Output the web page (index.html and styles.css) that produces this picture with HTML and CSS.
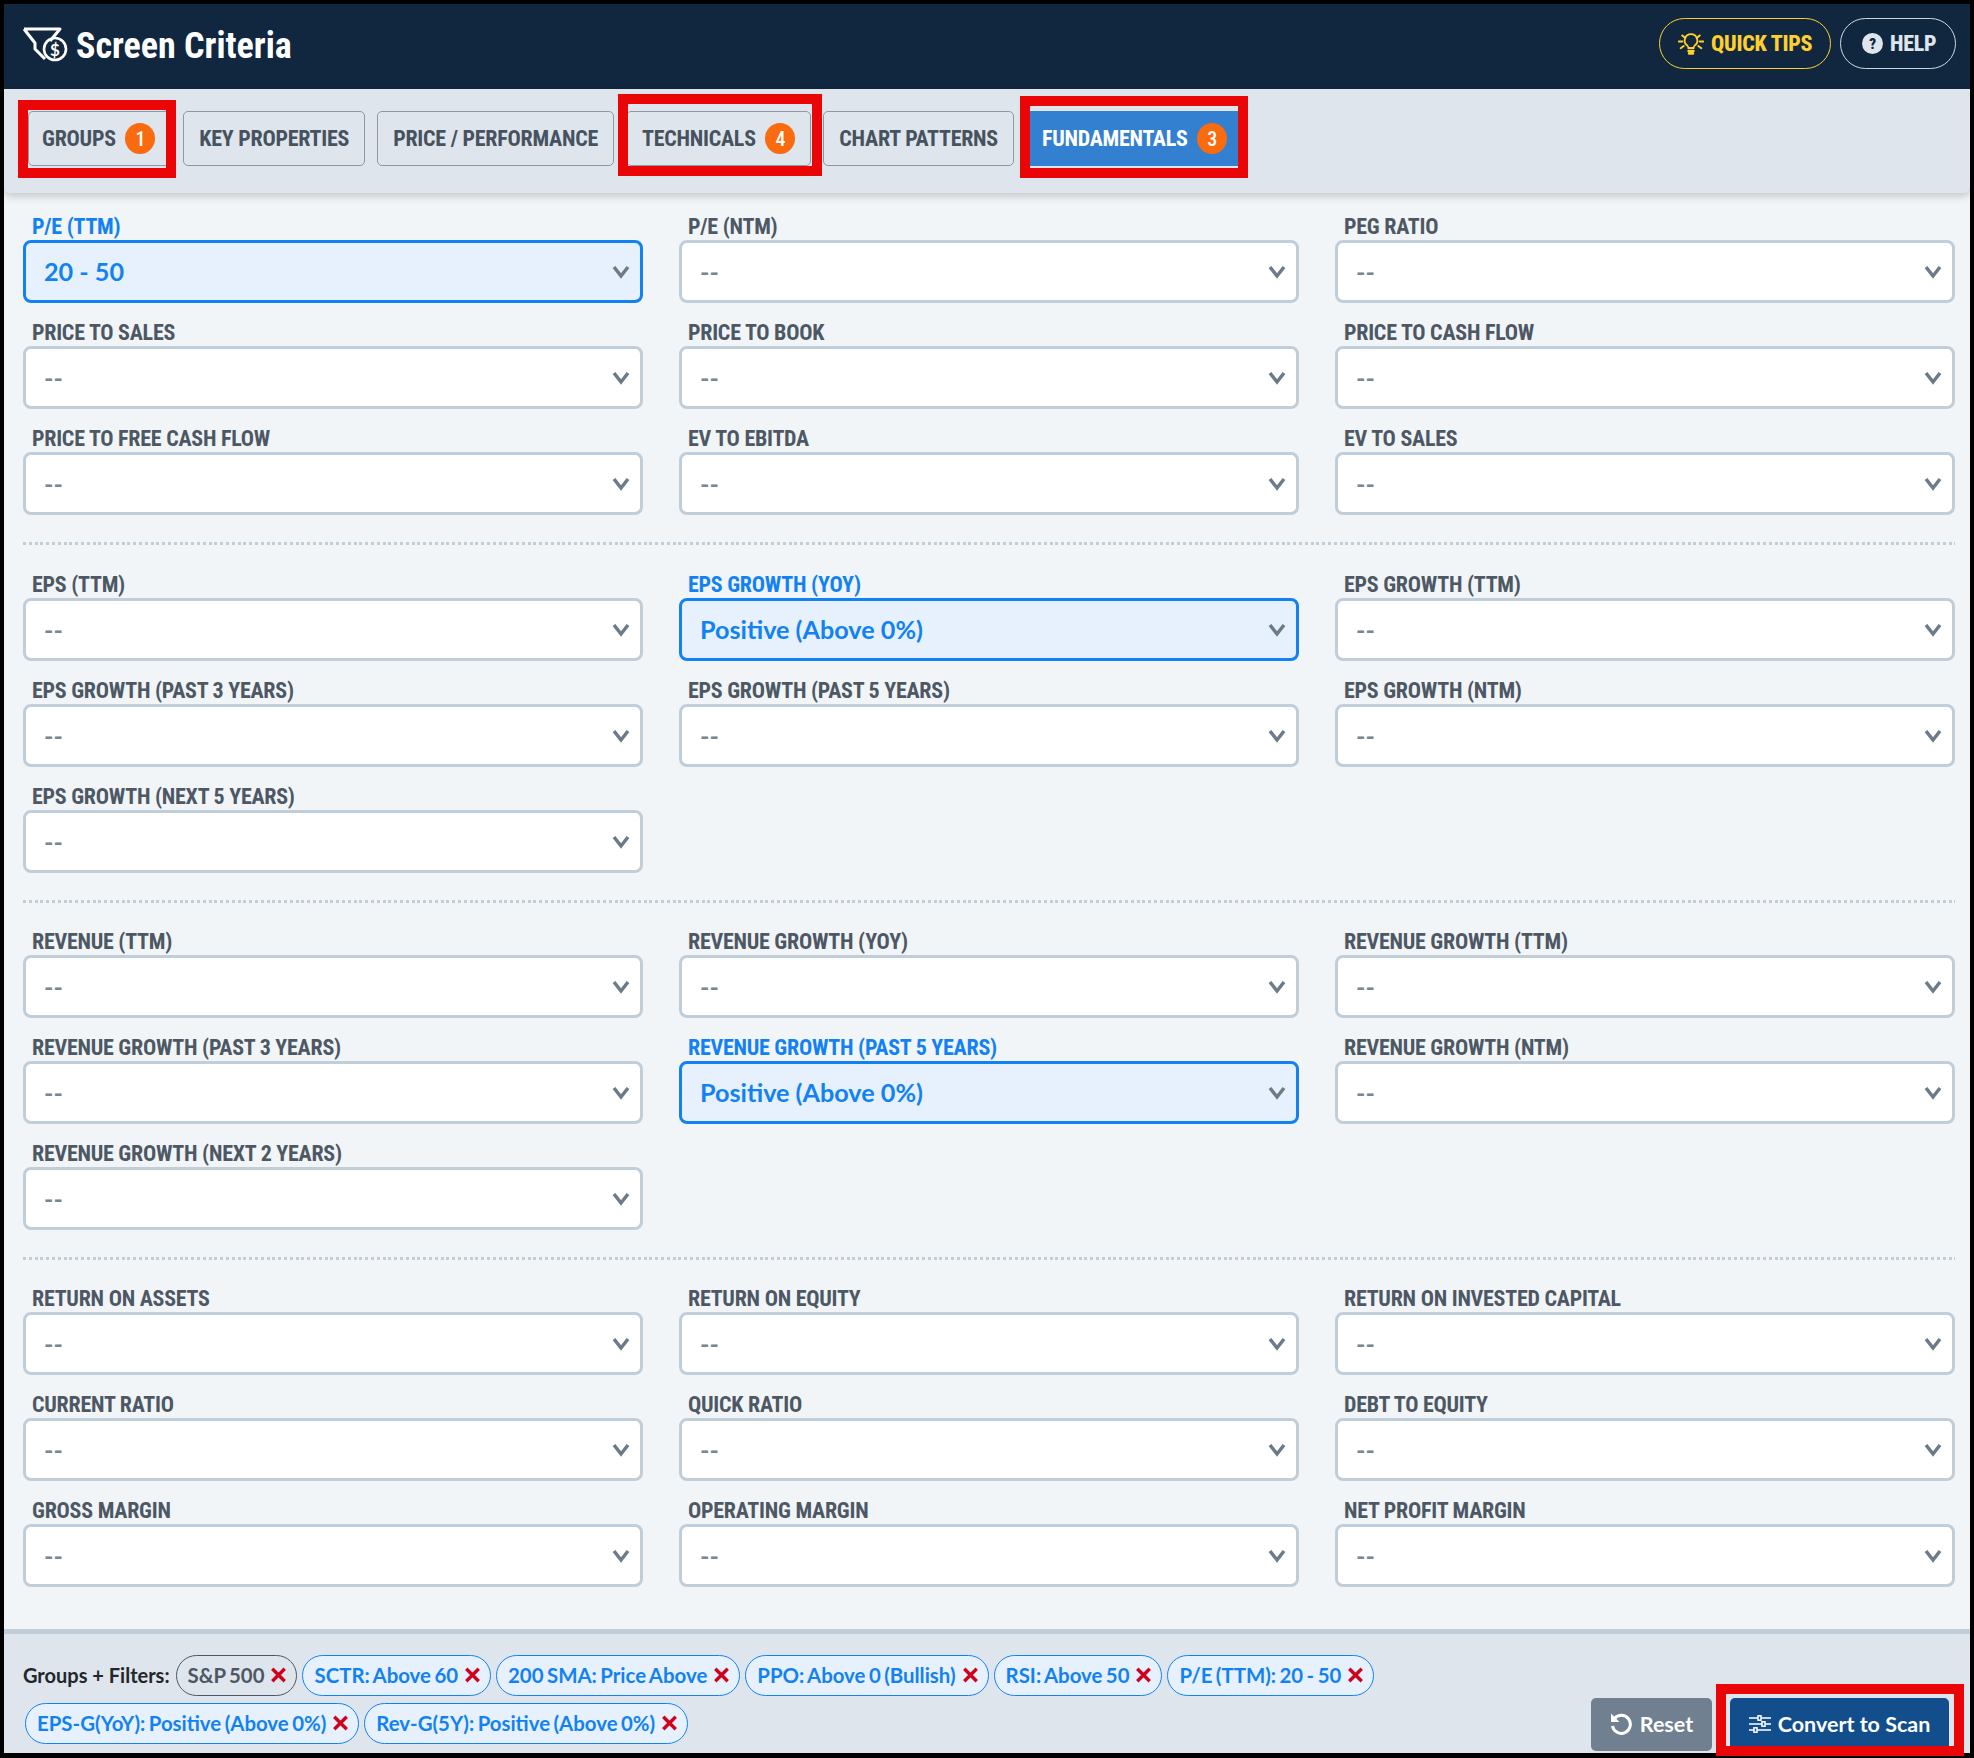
FILE: index.html
```html
<!DOCTYPE html>
<html>
<head>
    <title>Screen Criteria</title>
    <link rel="stylesheet" href="styles.css">
</head>
<body>
    <div class="panel">
        <div class="header">
            <div class="brand">
                <svg class="logo" viewBox="0 0 50 40" fill="none" stroke="#fff" stroke-width="3" stroke-linejoin="round">
                    <path d="M5 2H41L31 14M5 2L16 16V22L26 32"/>
                    <circle cx="36" cy="22" r="11" stroke-width="2.6"/>
                    <text x="36" y="28.500" font-family="Lato, sans-serif" font-size="17" font-weight="700" fill="#fff" stroke="none" text-anchor="middle">$</text>
                </svg>
                <span class="brand-title">Screen Criteria</span>
            </div>
            <div class="header-actions">
                <a class="pill pill-tips">
                    <svg class="bulb" viewBox="0 0 26 22" fill="none" stroke="#fdd02f" stroke-width="1.800" stroke-linecap="round">
                        <path d="M13 1.200a6.300 6.300 0 0 0-3.700 11.400c.7.6 1 1.400 1.100 2.400h5.200c.1-1 .4-1.800 1.100-2.400A6.300 6.300 0 0 0 13 1.200Z"/>
                        <path d="M10.500 18h5M11 20.500h4" stroke-width="2.400"/>
                        <path d="M4.300 2.500l3 2.500M21.700 2.500l-3 2.500M.8 8.500h3.500M21.700 8.500h3.500M2.700 15.200l3-2.200M23.300 15.200l-3-2.200" stroke-width="2"/>
                    </svg>
                    <span>QUICK TIPS</span>
                </a>
                <a class="pill pill-help">
                    <svg class="help-icon" viewBox="0 0 21 21">
                        <circle cx="10.500" cy="10.500" r="10.500" fill="#dee5ec"/>
                        <text x="10.500" y="16" font-family="Roboto, sans-serif" font-size="15" font-weight="900" fill="#11273f" text-anchor="middle">?</text>
                    </svg>
                    <span>HELP</span>
                </a>
            </div>
        </div>

        <div class="tabs">
            <a class="tab"><span>GROUPS</span><b class="badge">1</b></a>
            <a class="tab"><span>KEY PROPERTIES</span></a>
            <a class="tab"><span>PRICE / PERFORMANCE</span></a>
            <a class="tab"><span>TECHNICALS</span><b class="badge">4</b></a>
            <a class="tab"><span>CHART PATTERNS</span></a>
            <a class="tab tab-active"><span>FUNDAMENTALS</span><b class="badge">3</b></a>
        </div>

        <div class="criteria">
            <div class="grid">
                <div class="field active"><label>P/E (TTM)</label><select><option>20 - 50</option></select></div>
                <div class="field"><label>P/E (NTM)</label><select><option>--</option></select></div>
                <div class="field"><label>PEG RATIO</label><select><option>--</option></select></div>
                <div class="field"><label>PRICE TO SALES</label><select><option>--</option></select></div>
                <div class="field"><label>PRICE TO BOOK</label><select><option>--</option></select></div>
                <div class="field"><label>PRICE TO CASH FLOW</label><select><option>--</option></select></div>
                <div class="field"><label>PRICE TO FREE CASH FLOW</label><select><option>--</option></select></div>
                <div class="field"><label>EV TO EBITDA</label><select><option>--</option></select></div>
                <div class="field"><label>EV TO SALES</label><select><option>--</option></select></div>
            </div>
            <hr class="divider">
            <div class="grid">
                <div class="field"><label>EPS (TTM)</label><select><option>--</option></select></div>
                <div class="field active"><label>EPS GROWTH (YOY)</label><select><option>Positive (Above 0%)</option></select></div>
                <div class="field"><label>EPS GROWTH (TTM)</label><select><option>--</option></select></div>
                <div class="field"><label>EPS GROWTH (PAST 3 YEARS)</label><select><option>--</option></select></div>
                <div class="field"><label>EPS GROWTH (PAST 5 YEARS)</label><select><option>--</option></select></div>
                <div class="field"><label>EPS GROWTH (NTM)</label><select><option>--</option></select></div>
                <div class="field"><label>EPS GROWTH (NEXT 5 YEARS)</label><select><option>--</option></select></div>
            </div>
            <hr class="divider">
            <div class="grid">
                <div class="field"><label>REVENUE (TTM)</label><select><option>--</option></select></div>
                <div class="field"><label>REVENUE GROWTH (YOY)</label><select><option>--</option></select></div>
                <div class="field"><label>REVENUE GROWTH (TTM)</label><select><option>--</option></select></div>
                <div class="field"><label>REVENUE GROWTH (PAST 3 YEARS)</label><select><option>--</option></select></div>
                <div class="field active"><label>REVENUE GROWTH (PAST 5 YEARS)</label><select><option>Positive (Above 0%)</option></select></div>
                <div class="field"><label>REVENUE GROWTH (NTM)</label><select><option>--</option></select></div>
                <div class="field"><label>REVENUE GROWTH (NEXT 2 YEARS)</label><select><option>--</option></select></div>
            </div>
            <hr class="divider">
            <div class="grid">
                <div class="field"><label>RETURN ON ASSETS</label><select><option>--</option></select></div>
                <div class="field"><label>RETURN ON EQUITY</label><select><option>--</option></select></div>
                <div class="field"><label>RETURN ON INVESTED CAPITAL</label><select><option>--</option></select></div>
                <div class="field"><label>CURRENT RATIO</label><select><option>--</option></select></div>
                <div class="field"><label>QUICK RATIO</label><select><option>--</option></select></div>
                <div class="field"><label>DEBT TO EQUITY</label><select><option>--</option></select></div>
                <div class="field"><label>GROSS MARGIN</label><select><option>--</option></select></div>
                <div class="field"><label>OPERATING MARGIN</label><select><option>--</option></select></div>
                <div class="field"><label>NET PROFIT MARGIN</label><select><option>--</option></select></div>
            </div>
        </div>

        <div class="footer">
            <div class="chips">
                <span class="chips-title">Groups + Filters:</span>
                <span class="chip chip-group">S&amp;P 500<svg class="x" viewBox="0 0 15 14"><path d="M2 1.500l11 11M13 1.500l-11 11"/></svg></span>
                <span class="chip">SCTR: Above 60<svg class="x" viewBox="0 0 15 14"><path d="M2 1.500l11 11M13 1.500l-11 11"/></svg></span>
                <span class="chip">200 SMA: Price Above<svg class="x" viewBox="0 0 15 14"><path d="M2 1.500l11 11M13 1.500l-11 11"/></svg></span>
                <span class="chip">PPO: Above 0 (Bullish)<svg class="x" viewBox="0 0 15 14"><path d="M2 1.500l11 11M13 1.500l-11 11"/></svg></span>
                <span class="chip">RSI: Above 50<svg class="x" viewBox="0 0 15 14"><path d="M2 1.500l11 11M13 1.500l-11 11"/></svg></span>
                <span class="chip">P/E (TTM): 20 - 50<svg class="x" viewBox="0 0 15 14"><path d="M2 1.500l11 11M13 1.500l-11 11"/></svg></span>
                <span class="chip">EPS-G(YoY): Positive (Above 0%)<svg class="x" viewBox="0 0 15 14"><path d="M2 1.500l11 11M13 1.500l-11 11"/></svg></span>
                <span class="chip">Rev-G(5Y): Positive (Above 0%)<svg class="x" viewBox="0 0 15 14"><path d="M2 1.500l11 11M13 1.500l-11 11"/></svg></span>
            </div>
            <div class="footer-actions">
                <button class="btn btn-reset">
                    <svg class="icon-reset" viewBox="0 0 22 22" fill="none" stroke="#fff" stroke-width="3">
                        <path d="M4.500 5.500A9 9 0 1 1 2.500 13"/>
                        <path d="M1 0.500V9H9.500Z" fill="#fff" stroke="none"/>
                    </svg>
                    Reset
                </button>
                <button class="btn btn-convert">
                    <svg class="icon-sliders" viewBox="0 0 22 18" fill="none" stroke="#fff" stroke-width="1.500">
                        <path d="M0 3H9M12 3H22M0 9H13M16 9H22M0 15H5M8 15H22"/>
                        <rect x="9" y="0.800" width="3" height="4.400"/>
                        <rect x="13" y="6.800" width="3" height="4.400"/>
                        <rect x="5" y="12.800" width="3" height="4.400"/>
                    </svg>
                    Convert to Scan
                </button>
            </div>
        </div>

        <div class="callout callout-groups"></div>
        <div class="callout callout-technicals"></div>
        <div class="callout callout-fundamentals"></div>
        <div class="callout callout-convert"></div>
    </div>
</body>
</html>
```

FILE: styles.css
```css
* {
    box-sizing: border-box;
}

html, body {
    margin: 0;
    height: 100%;
}

body {
    background-color: #000;
    padding: 4px 4px 5px 4px;
    font-family: Lato, sans-serif;
}

.panel {
    position: relative;
    height: 1749px;
    display: flex;
    flex-direction: column;
    background-color: #f1f5f8;
}

/* top bar */
.header {
    height: 85px;
    flex: none;
    display: flex;
    align-items: center;
    justify-content: space-between;
    padding: 0 14px 0 15px;
    background-color: #11273f;
}

.brand {
    display: flex;
    align-items: center;
    gap: 7px;
}

.logo {
    width: 50px;
    height: 40px;
}

.brand-title {
    font-family: "Roboto Condensed", "Liberation Sans Narrow", Roboto, sans-serif;
    font-stretch: condensed;
    font-weight: 700;
    font-size: 36px;
    color: #fff;
    margin-top: -2px;
}

.header-actions {
    display: flex;
    gap: 9px;
    margin-bottom: 6px;
}

.pill {
    height: 51px;
    display: flex;
    align-items: center;
    border-radius: 26px;
    border: 1.500px solid;
    font-family: "Roboto Condensed", "Liberation Sans Narrow", Roboto, sans-serif;
    font-stretch: condensed;
    font-weight: 800;
    font-size: 22px;
    letter-spacing: -0.250px;
}

.pill-tips {
    width: 172px;
    padding-left: 18px;
    gap: 7px;
    color: #fdd02f;
    border-color: #fdd02f;
}

.bulb {
    width: 26px;
    height: 22px;
}

.pill-help {
    width: 116px;
    padding-left: 21px;
    gap: 7px;
    color: #dee5ec;
    border-color: #cfd8e1;
}

.help-icon {
    width: 21px;
    height: 21px;
}

/* tabs */
.tabs {
    height: 104px;
    flex: none;
    display: flex;
    gap: 12px;
    padding: 22px 0 0 24px;
    background-color: #dee5ec;
    border-radius: 0 0 6px 6px;
    box-shadow: 0 3px 8px rgba(0, 0, 0, 0.2);
    position: relative;
}

.tab {
    height: 55px;
    display: flex;
    align-items: center;
    gap: 9.500px;
    padding: 0 15px;
    border: 1px solid #8c98a4;
    border-radius: 5px;
    color: #47525f;
    font-family: "Roboto Condensed", "Liberation Sans Narrow", Roboto, sans-serif;
    font-stretch: condensed;
    font-weight: 700;
    font-size: 22px;
    letter-spacing: -0.250px;
    white-space: nowrap;
}

.tab:first-child {
    padding-left: 13px;
}

.tab-active {
    background-color: #3380d0;
    border-color: #3380d0;
    color: #fff;
}

.badge {
    width: 30px;
    height: 31px;
    border-radius: 50%;
    display: flex;
    align-items: center;
    justify-content: center;
    background-color: #fa6a0f;
    color: #fff;
    font-family: Roboto, sans-serif;
    font-weight: 500;
    font-size: 20px;
}

/* filter form */
.criteria {
    flex: 1;
    padding: 21px 15px 0 19px;
}

.grid {
    display: grid;
    grid-template-columns: repeat(3, 1fr);
    column-gap: 36px;
    row-gap: 17px;
}

.field label {
    display: block;
    height: 26px;
    line-height: 26px;
    padding-left: 9px;
    color: #4d5864;
    font-family: "Roboto Condensed", "Liberation Sans Narrow", Roboto, sans-serif;
    font-stretch: condensed;
    font-weight: 700;
    font-size: 22px;
    letter-spacing: -0.250px;
    white-space: nowrap;
}

.field select {
    display: block;
    width: 100%;
    height: 63px;
    padding: 0 0 2px 18px;
    appearance: none;
    border: 3px solid #c0ced9;
    border-radius: 8px;
    background: #fff url("data:image/svg+xml,%3Csvg xmlns='http://www.w3.org/2000/svg' width='18' height='14' fill='none' stroke='%236c7a89' stroke-width='3.500'%3E%3Cpath d='M2 2l7 9 7-9'/%3E%3C/svg%3E") no-repeat right 10px center;
    color: #7a8793;
    font-family: Lato, sans-serif;
    font-weight: 700;
    font-size: 25.200px;
}

.field.active label {
    color: #1281f3;
}

.field.active select {
    border-color: #1281f3;
    background-color: #e6f1fd;
    color: #1281f3;
}

.divider {
    height: 3px;
    margin: 27px 0 26px 0;
    border: 0;
    background: repeating-linear-gradient(90deg, #c0ced9 0 3px, transparent 3px 5.800px);
}

hr.divider:first-of-type {
    margin-bottom: 27px;
}

/* bottom bar */
.footer {
    height: 124px;
    flex: none;
    display: flex;
    justify-content: space-between;
    padding: 21px 0 0 19px;
    background-color: #dee5ec;
    border-top: 5px solid #c0ced9;
}

.chips {
    width: 1440px;
    display: flex;
    flex-wrap: wrap;
    align-items: center;
    align-content: flex-start;
    gap: 7px 5px;
    padding-left: 2px;
}

.chips-title {
    margin-left: -2px;
    margin-right: 1px;
    padding-bottom: 2px;
    font-weight: 700;
    font-size: 20px;
    color: #23272b;
}

.chip {
    height: 41px;
    display: flex;
    align-items: center;
    gap: 6px;
    padding: 0 9px 1px 11px;
    border: 1px solid #1281f3;
    border-radius: 21px;
    background-color: #e6f1fd;
    color: #1281f3;
    font-weight: 700;
    font-size: 20.400px;
    word-spacing: -1.500px;
    white-space: nowrap;
}

.chip-group {
    border-color: #4d5864;
    background-color: #dee5ec;
    color: #4d5864;
}

.x {
    width: 17px;
    height: 16px;
    fill: none;
    stroke: #d0021b;
    stroke-width: 3;
}

.footer-actions {
    display: flex;
    gap: 18px;
    padding: 43px 0 0 0;
}

.btn {
    height: 53px;
    display: flex;
    align-items: center;
    justify-content: center;
    padding: 0 0 2px 0;
    border: 0;
    border-radius: 5px;
    color: #fff;
    font-family: Lato, sans-serif;
    font-weight: 700;
    font-size: 21.500px;
}

.btn-reset {
    width: 121px;
    gap: 8px;
    background-color: #708090;
}

.btn-convert {
    width: 219px;
    gap: 7px;
    margin-right: 21px;
    background-color: #124e8c;
}

.icon-reset {
    width: 22px;
    height: 22px;
}

.icon-sliders {
    width: 22px;
    height: 18px;
}

/* red annotation boxes drawn over the screenshot */
.callout {
    position: absolute;
    border: 10px solid #ea0606;
    pointer-events: none;
}

.callout-groups {
    left: 14px;
    top: 96px;
    width: 158px;
    height: 78px;
}

.callout-technicals {
    left: 614px;
    top: 90px;
    width: 204px;
    height: 82px;
}

.callout-fundamentals {
    left: 1016px;
    top: 92px;
    width: 228px;
    height: 82px;
}

.callout-convert {
    left: 1712px;
    top: 1680px;
    width: 248px;
    height: 72px;
}
```
